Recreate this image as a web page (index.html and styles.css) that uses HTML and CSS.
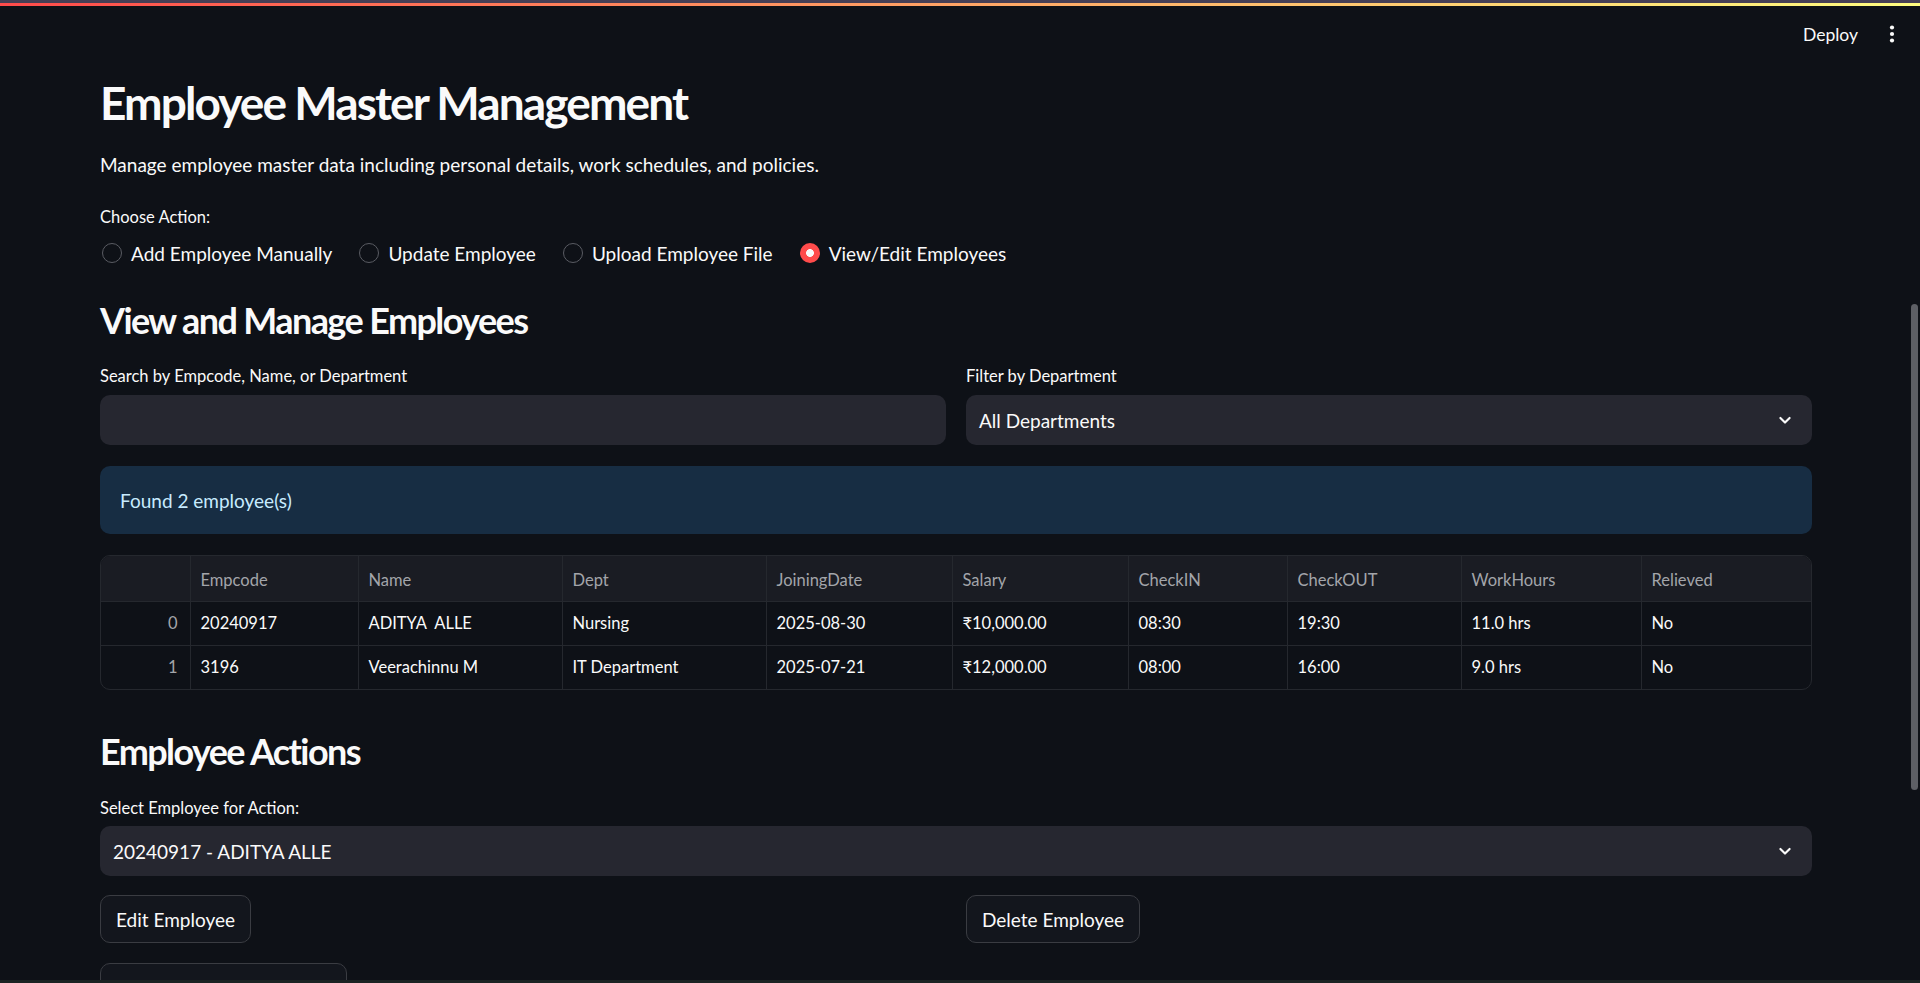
FILE: index.html
```html
<!DOCTYPE html>
<html lang="en">
<head>
<meta charset="utf-8">
<title>Employee Master Management</title>
<link rel="stylesheet" href="styles.css">
</head>
<body>
<div class="chrome-strip"></div>
<div class="decoration"></div>
<header class="app-header">
  <span class="deploy">Deploy</span>
  <span class="menu-btn">
    <svg width="24" height="24" viewBox="0 0 24 24"><circle cx="12" cy="5.5" r="2.1" fill="#fafafa"/><circle cx="12" cy="12" r="2.1" fill="#fafafa"/><circle cx="12" cy="18.5" r="2.1" fill="#fafafa"/></svg>
  </span>
</header>
<main class="main">
  <h1 class="title">Employee Master Management</h1>
  <p class="subtitle">Manage employee master data including personal details, work schedules, and policies.</p>
  <div class="label choose-label">Choose Action:</div>
  <div class="radio-group">
    <label class="radio"><span class="dot"></span><span>Add Employee Manually</span></label>
    <label class="radio"><span class="dot"></span><span>Update Employee</span></label>
    <label class="radio"><span class="dot"></span><span>Upload Employee File</span></label>
    <label class="radio"><span class="dot checked"></span><span>View/Edit Employees</span></label>
  </div>

  <h2 class="h2 h2-view">View and Manage Employees</h2>
  <div class="two-col">
    <div class="field">
      <div class="label">Search by Empcode, Name, or Department</div>
      <div class="input"></div>
    </div>
    <div class="field">
      <div class="label">Filter by Department</div>
      <div class="input select"><span>All Departments</span>
        <svg class="chev" width="20" height="20" viewBox="0 0 24 24"><path d="M6.5 9.5l5.5 5.5 5.5-5.5" fill="none" stroke="#fafafa" stroke-width="2.6" stroke-linecap="round" stroke-linejoin="round"/></svg>
      </div>
    </div>
  </div>

  <div class="info">Found 2 employee(s)</div>

  <div class="grid-wrap">
    <table class="grid">
      <colgroup>
        <col style="width:89px"><col style="width:168px"><col style="width:204px"><col style="width:204px"><col style="width:186px"><col style="width:176px"><col style="width:159px"><col style="width:174px"><col style="width:180px"><col>
      </colgroup>
      <thead>
        <tr><th></th><th>Empcode</th><th>Name</th><th>Dept</th><th>JoiningDate</th><th>Salary</th><th>CheckIN</th><th>CheckOUT</th><th>WorkHours</th><th>Relieved</th></tr>
      </thead>
      <tbody>
        <tr><td class="idx">0</td><td>20240917</td><td>ADITYA&nbsp; ALLE</td><td>Nursing</td><td>2025-08-30</td><td>₹10,000.00</td><td>08:30</td><td>19:30</td><td>11.0 hrs</td><td>No</td></tr>
        <tr><td class="idx">1</td><td>3196</td><td>Veerachinnu M</td><td>IT Department</td><td>2025-07-21</td><td>₹12,000.00</td><td>08:00</td><td>16:00</td><td>9.0 hrs</td><td>No</td></tr>
      </tbody>
    </table>
  </div>

  <h2 class="h2 h2-actions">Employee Actions</h2>
  <div class="label">Select Employee for Action:</div>
  <div class="input select wide"><span>20240917 - ADITYA ALLE</span>
    <svg class="chev" width="20" height="20" viewBox="0 0 24 24"><path d="M6.5 9.5l5.5 5.5 5.5-5.5" fill="none" stroke="#fafafa" stroke-width="2.6" stroke-linecap="round" stroke-linejoin="round"/></svg>
  </div>
  <div class="two-col buttons">
    <div><button class="btn">Edit Employee</button></div>
    <div><button class="btn">Delete Employee</button></div>
  </div>
  <div class="more"><button class="btn btn-third">Toggle Relieved Status</button></div>
</main>
<div class="scroll-thumb"></div>
<div class="bottom-strip"></div>
</body>
</html>
```
FILE: styles.css
```css
* { box-sizing: border-box; }
html, body {
  margin: 0;
  height: 983px;
  overflow: hidden;
  background: #0e1117;
  color: #fafafa;
  font-family: Lato, "Noto Sans", sans-serif;
}
.chrome-strip { height: 3px; background: #463f55; }
.decoration {
  height: 3px;
  background: linear-gradient(90deg, #ff4b4b, #fffd80);
}
.app-header {
  height: 56px;
  display: flex;
  align-items: center;
  justify-content: flex-end;
  padding-right: 16px;
  gap: 22px;
}
.deploy { font-size: 17.5px; color: #fafafa; }
.menu-btn { display: flex; width: 24px; height: 24px; }

.main {
  padding: 0 108px 0 100px;
  display: flex;
  flex-direction: column;
}
.title {
  margin: 8px 0 0;
  font-size: 46px;
  line-height: 66px;
  font-weight: 700;
  letter-spacing: -1.9px;
}
.subtitle {
  margin: 14px 0 0;
  font-size: 19px;
  line-height: 30px;
}
.label {
  font-size: 16.5px;
  line-height: 22px;
}
.choose-label { margin-top: 26px; }
.radio-group {
  margin-top: 10px;
  display: flex;
  gap: 25px;
  height: 30px;
  align-items: center;
}
.radio {
  display: flex;
  align-items: center;
  gap: 9px;
  font-size: 19px;
}
.dot {
  width: 20px;
  height: 20px;
  border-radius: 50%;
  border: 1px solid #5a5c63;
  background: #0e1117;
  display: inline-block;
  margin-left: 2px;
}
.dot.checked {
  border: none;
  background: radial-gradient(circle, #fafafa 0 3.6px, #ff4b4b 4.2px);
}
.h2 {
  margin: 0;
  font-size: 36px;
  line-height: 54px;
  font-weight: 700;
  letter-spacing: -1.6px;
}
.h2-view { margin-top: 25px; }
.two-col {
  display: grid;
  grid-template-columns: 1fr 1fr;
  gap: 20px;
}
.field { display: flex; flex-direction: column; }
.two-col .label { margin-top: 18px; margin-bottom: 8px; }
.input {
  height: 50px;
  border-radius: 10px;
  background: #262730;
}
.select {
  display: flex;
  align-items: center;
  justify-content: space-between;
  padding: 0 17px 0 13px;
  font-size: 19px;
}
.chev { display: block; }
.info {
  margin-top: 21px;
  height: 68px;
  border-radius: 10px;
  background: #172d43;
  color: #c7ebff;
  font-size: 19px;
  display: flex;
  align-items: center;
  padding-left: 20px;
}
.grid-wrap {
  margin-top: 21px;
  border: 1px solid #25282e;
  border-radius: 10px;
  overflow: hidden;
}
.grid {
  width: 100%;
  border-collapse: collapse;
  table-layout: fixed;
  font-size: 16.5px;
}
.grid th, .grid td {
  text-align: left;
  padding: 0 10px;
  border-left: 1px solid #25282e;
  border-top: 1px solid #25282e;
  white-space: nowrap;
  overflow: hidden;
}
.grid th:first-child, .grid td:first-child { border-left: none; }
.grid thead th {
  border-top: none;
  height: 45px;
  padding-top: 3px;
  background: #1a1c23;
  color: #a3a5aa;
  font-weight: 400;
}
.grid tbody td { height: 44px; color: #fafafa; }
.grid td.idx { text-align: right; color: #a3a5aa; padding-right: 12px; }

.h2-actions { margin-top: 34px; }
.h2-actions + .label { margin-top: 19px; }
.wide { margin-top: 7px; }
.buttons { margin-top: 19px; }
.btn {
  height: 48px;
  padding: 0 15px;
  border-radius: 10px;
  border: 1px solid #3a3c42;
  background: #13161d;
  color: #fafafa;
  font-family: inherit;
  font-size: 19px;
}
.more { margin-top: 20px; }
.btn-third { width: 247px; }
.scroll-thumb {
  position: fixed;
  right: 2px;
  top: 304px;
  width: 7px;
  height: 486px;
  border-radius: 4px;
  background: #5d5f65;
}
.bottom-strip {
  position: fixed;
  left: 0;
  right: 0;
  bottom: 0;
  height: 3px;
  background: #1b2323;
}
```
